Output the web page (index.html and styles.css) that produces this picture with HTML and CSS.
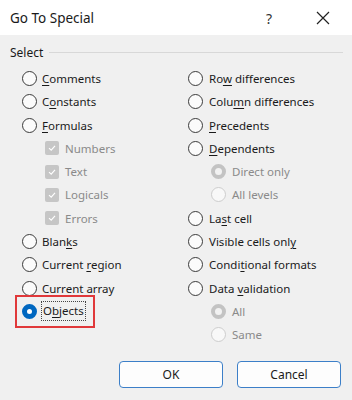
FILE: index.html
```html
<!DOCTYPE html>
<html>
<head>
<meta charset="utf-8">
<link rel="stylesheet" href="styles.css">
</head>
<body>
<div class="dialog">
  <div class="titlebar">
    <span class="title">Go To Special</span>
    <span class="help">?</span>
    <span class="close">
      <svg width="14" height="14" viewBox="0 0 14 14"><path d="M1 1 L13 13 M13 1 L1 13" stroke="#222" stroke-width="1.2" fill="none"/></svg>
    </span>
  </div>
  <div class="body">
    <div class="legend"><span>Select</span><span class="rule"></span></div>
    <div class="cols">
      <div class="col left">
        <div class="row"><span class="radio"></span><span class="lbl"><u>C</u>omments</span></div>
        <div class="row"><span class="radio"></span><span class="lbl">C<u>o</u>nstants</span></div>
        <div class="row"><span class="radio"></span><span class="lbl"><u>F</u>ormulas</span></div>
        <div class="row sub"><span class="check"><svg width="10" height="10" viewBox="0 0 10 10"><path d="M2 5.2 L4.2 7.2 L8 2.8" stroke="#fff" stroke-width="1.1" fill="none"/></svg></span><span class="lbl dis">Numbers</span></div>
        <div class="row sub"><span class="check"><svg width="10" height="10" viewBox="0 0 10 10"><path d="M2 5.2 L4.2 7.2 L8 2.8" stroke="#fff" stroke-width="1.1" fill="none"/></svg></span><span class="lbl dis">Text</span></div>
        <div class="row sub"><span class="check"><svg width="10" height="10" viewBox="0 0 10 10"><path d="M2 5.2 L4.2 7.2 L8 2.8" stroke="#fff" stroke-width="1.1" fill="none"/></svg></span><span class="lbl dis">Logicals</span></div>
        <div class="row sub"><span class="check"><svg width="10" height="10" viewBox="0 0 10 10"><path d="M2 5.2 L4.2 7.2 L8 2.8" stroke="#fff" stroke-width="1.1" fill="none"/></svg></span><span class="lbl dis">Errors</span></div>
        <div class="row"><span class="radio"></span><span class="lbl">Blan<u>k</u>s</span></div>
        <div class="row"><span class="radio"></span><span class="lbl">Current <u>r</u>egion</span></div>
        <div class="row"><span class="radio"></span><span class="lbl">Current array</span></div>
        <div class="row"><span class="hl"><span class="radio on"></span><span class="lbl focus">O<u>b</u>jects</span></span></div>
      </div>
      <div class="col right">
        <div class="row"><span class="radio"></span><span class="lbl">Ro<u>w</u> differences</span></div>
        <div class="row"><span class="radio"></span><span class="lbl">Colu<u>m</u>n differences</span></div>
        <div class="row"><span class="radio"></span><span class="lbl"><u>P</u>recedents</span></div>
        <div class="row"><span class="radio"></span><span class="lbl"><u>D</u>ependents</span></div>
        <div class="row sub2"><span class="radio dison"></span><span class="lbl dis">Direct only</span></div>
        <div class="row sub2"><span class="radio disoff"></span><span class="lbl dis">All levels</span></div>
        <div class="row"><span class="radio"></span><span class="lbl">La<u>s</u>t cell</span></div>
        <div class="row"><span class="radio"></span><span class="lbl">Visible cells onl<u>y</u></span></div>
        <div class="row"><span class="radio"></span><span class="lbl">Condi<u>t</u>ional formats</span></div>
        <div class="row"><span class="radio"></span><span class="lbl">Data <u>v</u>alidation</span></div>
        <div class="row sub2"><span class="radio dison"></span><span class="lbl dis">All</span></div>
        <div class="row sub2"><span class="radio disoff"></span><span class="lbl dis">Same</span></div>
      </div>
    </div>
    <div class="buttons">
      <button class="btn">OK</button>
      <button class="btn">Cancel</button>
    </div>
  </div>
</div>
</body>
</html>
```

FILE: styles.css
```css
html, body {
  margin: 0;
  padding: 0;
  background: #f0f0f0;
}
.dialog {
  width: 352px;
  height: 400px;
  font-family: "Noto Sans", "Open Sans", sans-serif;
  font-size: 11.5px;
  color: #1a1a1a;
  overflow: hidden;
}
.titlebar {
  height: 35px;
  background: #ffffff;
  display: flex;
  align-items: center;
  padding-left: 10px;
  padding-top: 1px;
  box-sizing: border-box;
}
.title {
  font-size: 13.5px;
  flex: 1;
  color: #1a1a1a;
}
.help {
  font-size: 14px;
  width: 20px;
  margin-right: 30px;
  color: #333;
}
.close {
  width: 14px;
  height: 14px;
  margin-right: 22px;
  display: flex;
}
.body {
  padding: 9px 0 0 10px;
}
.legend {
  display: flex;
  align-items: center;
  height: 16px;
  color: #1a1a1a;
  font-size: 12px;
}
.rule {
  flex: 1;
  height: 1px;
  background: #d8d8d8;
  margin-left: 6px;
  margin-right: 9px;
}
.cols {
  display: grid;
  grid-template-columns: 166px 1fr;
  padding-left: 12px;
  margin-top: 7px;
}
.row {
  height: 23.27px;
  display: flex;
  align-items: center;
}
.radio {
  width: 13px;
  height: 13px;
  border: 1px solid #3a3a3a;
  border-radius: 50%;
  background: #fbfbfb;
  box-sizing: content-box;
  margin-right: 5px;
  flex: none;
}
.right .radio { margin-right: 6px; }
.radio.on {
  background: #fff;
  border: 5px solid #0067c0;
  width: 5px;
  height: 5px;
}
.radio.dison {
  border: 4px solid #c3c3c3;
  width: 7px;
  height: 7px;
  background: #f2f2f2;
}
.radio.disoff {
  border-color: #cdcdcd;
  background: #f8f8f8;
}
.sub { padding-left: 23px; }
.sub2 { padding-left: 23px; }
.check {
  width: 14px;
  height: 14px;
  background: #c6c6c6;
  border-radius: 2px;
  margin-right: 6px;
  display: flex;
  align-items: center;
  justify-content: center;
  flex: none;
}
.lbl u { text-decoration-thickness: 1px; text-underline-offset: 2px; }
.dis { color: #8a8a8a; }
.hl {
  display: flex;
  align-items: center;
  border: 2px solid #e0383a;
  margin-left: -7px;
  padding: 4px 8px 4px 5px;
  height: 21px;
}
.focus {
  outline: 1px dotted #444;
  outline-offset: 0px;
  padding: 0 1px;
  line-height: 18px;
}
.buttons {
  display: flex;
  justify-content: flex-end;
  gap: 14px;
  padding-right: 11px;
  margin-top: 15px;
}
.btn {
  width: 104px;
  height: 27px;
  border: 1px solid #3c7fc8;
  border-radius: 4px;
  background: #fdfdfd;
  font-family: "Noto Sans", "Open Sans", sans-serif;
  font-size: 12px;
  color: #1a1a1a;
  padding: 0;
}
```
